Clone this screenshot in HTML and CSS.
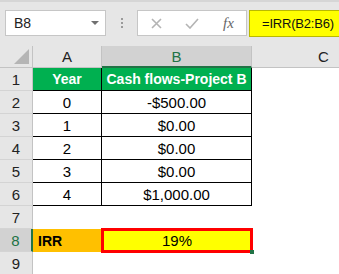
FILE: index.html
```html
<!DOCTYPE html>
<html lang="en">
<head>
  <meta charset="UTF-8">
  <meta name="viewport" content="width=device-width, initial-scale=1.0">
  <title>IRR</title>
  <link rel="stylesheet" href="styles.css">
</head>
<body>

  <div class="toolbar">
    <div class="namebox">
      <span>B8</span>
      <svg class="caret" width="8" height="4" viewBox="0 0 8 4"><path d="M0 0H8L4 4Z" fill="#707070"/></svg>
    </div>
    <div class="grip"><i></i><i></i><i></i></div>
    <div class="fxbox">
      <svg class="cancel" width="11" height="11" viewBox="0 0 11 11"><path d="M1 1L10 10M10 1L1 10" stroke="#b4b4b4" stroke-width="1.6"/></svg>
      <svg class="enter" width="14" height="11" viewBox="0 0 14 11"><path d="M1 6L5 10L13 1" stroke="#b4b4b4" stroke-width="1.6" fill="none"/></svg>
      <span class="fx">fx</span>
    </div>
    <div class="formula">=IRR(B2:B6)</div>
  </div>

  <div class="sheet">
    <div class="corner"><span class="tri"></span></div>
    <div class="colhead">A</div>
    <div class="colhead active">B</div>
    <div class="colhead cut">C</div>

    <div class="rowhead">1</div>
    <div class="cell tbl head">Year</div>
    <div class="cell tbl head">Cash flows-Project B</div>
    <div class="cell"></div>

    <div class="rowhead">2</div>
    <div class="cell tbl">0</div>
    <div class="cell tbl">-$500.00</div>
    <div class="cell"></div>

    <div class="rowhead">3</div>
    <div class="cell tbl">1</div>
    <div class="cell tbl">$0.00</div>
    <div class="cell"></div>

    <div class="rowhead">4</div>
    <div class="cell tbl">2</div>
    <div class="cell tbl">$0.00</div>
    <div class="cell"></div>

    <div class="rowhead">5</div>
    <div class="cell tbl">3</div>
    <div class="cell tbl">$0.00</div>
    <div class="cell"></div>

    <div class="rowhead">6</div>
    <div class="cell tbl">4</div>
    <div class="cell tbl">$1,000.00</div>
    <div class="cell"></div>

    <div class="rowhead">7</div>
    <div class="cell"></div>
    <div class="cell"></div>
    <div class="cell"></div>

    <div class="rowhead active">8</div>
    <div class="cell label">IRR</div>
    <div class="cell result">19%<span class="handle"></span></div>
    <div class="cell"></div>

    <div class="rowhead">9</div>
    <div class="cell"></div>
    <div class="cell"></div>
    <div class="cell"></div>
  </div>

</body>
</html>
```

FILE: styles.css
```css
body {
  margin: 0;
  width: 339px;
  height: 274px;
  overflow: hidden;
  background: #ffffff;
  font-family: "Liberation Sans", Arial, sans-serif;
}

.toolbar {
  display: flex;
  align-items: flex-start;
  box-sizing: border-box;
  height: 46px;
  padding: 8px 0 0 5px;
  background: #e6e6e6;
  border-top: 2px solid #d6d6d6;
}

.namebox {
  display: flex;
  align-items: center;
  justify-content: space-between;
  box-sizing: border-box;
  width: 101px;
  height: 26px;
  padding: 0 6px 0 8px;
  background: #fff;
  border: 1px solid #c6c6c6;
  font-size: 14px;
  color: #222;
}

.grip {
  display: flex;
  flex-direction: column;
  align-items: center;
  gap: 2px;
  width: 31px;
  padding-top: 8px;
}

.grip i {
  display: block;
  width: 2px;
  height: 2px;
  background: #9a9a9a;
}

.fxbox {
  display: flex;
  align-items: center;
  box-sizing: border-box;
  width: 110px;
  height: 26px;
  padding-left: 13px;
  background: #fff;
  border: 1px solid #c6c6c6;
}

.enter {
  margin-left: 23px;
}

.fx {
  margin-left: 24px;
  font-family: "Liberation Serif", serif;
  font-style: italic;
  font-size: 15px;
  color: #666;
}

.formula {
  flex: 1;
  box-sizing: border-box;
  height: 27px;
  margin-left: 2px;
  padding-left: 12px;
  background: #ffff00;
  border: 1px solid #b9b900;
  border-right: none;
  font-size: 13px;
  line-height: 25px;
  letter-spacing: -0.2px;
  color: #111;
}

.sheet {
  display: grid;
  grid-template-columns: 33px 69px 150px 1fr;
  grid-template-rows: 22px;
  grid-auto-rows: 23px;
  font-size: 15px;
}

.corner,
.colhead,
.rowhead {
  box-sizing: border-box;
  background: #e6e6e6;
  color: #222;
  display: flex;
  align-items: center;
  justify-content: center;
}

.corner {
  position: relative;
  border-right: 1px solid #c3c3c3;
  border-bottom: 1px solid #c3c3c3;
}

.tri {
  position: absolute;
  right: 3px;
  bottom: 3px;
  width: 0;
  height: 0;
  border-left: 15px solid transparent;
  border-bottom: 15px solid #b5b5b5;
}

.colhead {
  border-right: 1px solid #c3c3c3;
  border-bottom: 1px solid #c3c3c3;
}

/* column C runs past the window, so its label sits right of centre */
.colhead.cut {
  justify-content: flex-start;
  padding-left: 66px;
  border-right: none;
}

.colhead.active {
  background: #d2d2d2;
  color: #217346;
  border-bottom: 2px solid #217346;
}

.rowhead {
  border-right: 1px solid #c3c3c3;
  border-bottom: 1px solid #d4d4d4;
}

.rowhead.active {
  background: #d2d2d2;
  color: #217346;
  border-right: 2px solid #217346;
}

.cell {
  box-sizing: border-box;
  display: flex;
  align-items: center;
  justify-content: center;
  color: #000;
}

.cell.tbl {
  border-right: 1px solid #000;
  border-bottom: 1px solid #000;
}

.cell.head {
  background: #00b050;
  color: #fff;
  font-weight: bold;
  font-size: 14px;
}

.cell.label {
  justify-content: flex-start;
  padding-left: 5px;
  background: #ffc000;
  font-weight: bold;
  font-size: 14px;
}

.cell.result {
  position: relative;
  background: #ffff00;
  outline: 3px solid #ff0000;
  outline-offset: -2px;
}

.handle {
  position: absolute;
  right: -3px;
  bottom: -3px;
  width: 4px;
  height: 4px;
  background: #217346;
  border: 1px solid #fff;
  border-top: none;
  border-left: none;
}
```
